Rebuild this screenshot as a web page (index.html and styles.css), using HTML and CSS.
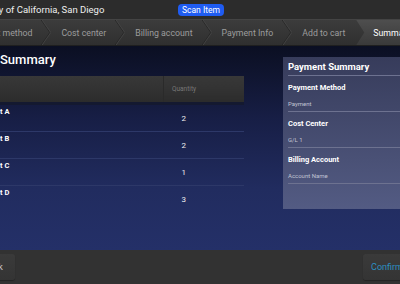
FILE: index.html
```html
<!doctype html>
<html>

<head>
    <link rel="stylesheet" href="styles.css">
</head>

<body>
    <div class="app">
        <header class="topbar">
            <span class="org">University of California, San Diego</span>
            <button class="scan">Scan Item</button>
            <span></span>
        </header>

        <nav class="steps">
            <span class="step">Payment method</span>
            <svg class="chev" viewBox="0 0 10 26"><polyline class="dark" points="0,0 9,13 0,26" /><polyline class="light" points="1,0 10,13 1,26" /></svg>
            <span class="step">Cost center</span>
            <svg class="chev" viewBox="0 0 10 26"><polyline class="dark" points="0,0 9,13 0,26" /><polyline class="light" points="1,0 10,13 1,26" /></svg>
            <span class="step">Billing account</span>
            <svg class="chev" viewBox="0 0 10 26"><polyline class="dark" points="0,0 9,13 0,26" /><polyline class="light" points="1,0 10,13 1,26" /></svg>
            <span class="step">Payment Info</span>
            <svg class="chev" viewBox="0 0 10 26"><polyline class="dark" points="0,0 9,13 0,26" /><polyline class="light" points="1,0 10,13 1,26" /></svg>
            <span class="step">Add to cart</span>
            <span class="step active">Summary</span>
        </nav>

        <main class="content">
            <section class="summary">
                <h1>Summary</h1>
                <table class="items">
                    <thead>
                        <tr>
                            <th class="name"></th>
                            <th class="qty">Quantity</th>
                        </tr>
                    </thead>
                    <tbody>
                        <tr>
                            <td class="name"><b>Product A</b><small>Item 1</small></td>
                            <td class="qty">2</td>
                        </tr>
                        <tr>
                            <td class="name"><b>Product B</b><small>Item</small></td>
                            <td class="qty">2</td>
                        </tr>
                        <tr>
                            <td class="name"><b>Product C</b><small>Item</small></td>
                            <td class="qty">1</td>
                        </tr>
                        <tr>
                            <td class="name"><b>Product D</b><small>Item</small></td>
                            <td class="qty">3</td>
                        </tr>
                    </tbody>
                </table>
            </section>

            <aside class="panel">
                <h2>Payment Summary</h2>
                <div class="field">
                    <h3>Payment Method</h3>
                    <p>Payment</p>
                </div>
                <div class="field">
                    <h3>Cost Center</h3>
                    <p>G/L 1</p>
                </div>
                <div class="field">
                    <h3>Billing Account</h3>
                    <p>Account Name</p>
                </div>
            </aside>
        </main>

        <footer class="actions">
            <button class="btn back">Back</button>
            <button class="btn confirm">Confirm</button>
        </footer>
    </div>
</body>

</html>
```

FILE: styles.css
```css
html,
body {
    overflow: hidden;
    width: 100%;
    height: 100%;
    margin: 0;
    background-color: #323232;
}

.app {
    width: 480px;
    margin-left: -40px;
    font-family: Roboto, "Liberation Sans", sans-serif;
}

/* top bar */

.topbar {
    display: grid;
    grid-template-columns: 1fr auto 1fr;
    align-items: center;
    height: 19px;
    padding-left: 2px;
    background-color: #2c2c2c;
    border-bottom: 1px solid #444;
}

.org {
    color: #eee;
    font-size: 9.5px;
    white-space: nowrap;
}

.scan {
    height: 12px;
    padding: 0 4px;
    border: none;
    border-radius: 4px;
    background-color: #1f5cf2;
    color: #fff;
    font-family: inherit;
    font-size: 8.5px;
    line-height: 12px;
}

/* steps */

.steps {
    display: flex;
    align-items: stretch;
    height: 25px;
    background: linear-gradient(#3c3c3c, #2f2f2f);
    border-bottom: 1px solid #1f1f1f;
}

.step {
    display: flex;
    align-items: center;
    padding: 0 9px 0 10px;
    color: #9c9c9c;
    font-size: 8.75px;
    white-space: nowrap;
}

.step:first-child {
    padding-left: 6px;
}

.chev {
    width: 10px;
    height: 25px;
    flex: none;
}

.chev polyline {
    fill: none;
    stroke-width: 0.8;
}

.chev .dark {
    stroke: #242424;
}

.chev .light {
    stroke: #484848;
}

.step.active {
    flex: 1;
    margin-left: 2px;
    padding-left: 17px;
    background: linear-gradient(#4e4e4e, #3a3a3a);
    clip-path: polygon(0 0, 100% 0, 100% 100%, 0 100%, 8px 50%);
    color: #fff;
}

/* main area */

.content {
    display: flex;
    align-items: flex-start;
    height: 198px;
    padding: 6px 0 0 10px;
    background: linear-gradient(#0b0f22, #171e45 35%, #212c5f 70%, #243068);
}

.summary {
    width: 274px;
    flex: none;
}

.summary h1 {
    margin: 0 0 8px 30px;
    color: #fff;
    font-size: 13px;
    font-weight: 500;
    line-height: 16px;
}

.items {
    width: 100%;
    border-collapse: collapse;
}

.items th {
    height: 26px;
    padding: 0;
    background: linear-gradient(#383838, #2c2c2c);
    border-bottom: 3px solid #141930;
    color: #777;
    font-size: 6.5px;
    font-weight: normal;
    text-align: left;
}

.items th.qty {
    width: 72px;
    padding-left: 8px;
    border-left: 1px solid #2a2a2a;
}

.items td {
    height: 26px;
    padding: 0;
    border-bottom: 1px solid #2d3868;
}

.items tr:last-child td {
    border-bottom: none;
}

.items td.name {
    padding-left: 6px;
    vertical-align: top;
}

.items td.name b {
    display: block;
    margin-top: 2px;
    color: #fff;
    font-size: 7.5px;
    line-height: 9px;
}

.items td.name small {
    display: block;
    color: #b0b4c8;
    font-size: 6px;
    line-height: 9px;
}

.items td.qty {
    padding-left: 18px;
    color: #eee;
    font-size: 8px;
    vertical-align: middle;
}

/* right panel */

.panel {
    width: 115px;
    flex: none;
    margin: 5px 0 0 39px;
    padding: 0 0 25px 5px;
    background: linear-gradient(#373c5b, #535b83);
}

.panel h2 {
    margin: 0;
    height: 17px;
    padding-top: 1px;
    border-bottom: 1px solid #6d7290;
    color: #fff;
    font-size: 9.5px;
    font-weight: bold;
    line-height: 17px;
}

.field {
    height: 35px;
    border-bottom: 1px solid #6d7290;
}

.field h3 {
    margin: 0;
    padding-top: 7px;
    color: #fff;
    font-size: 7.5px;
    font-weight: bold;
    line-height: 10px;
}

.field p {
    margin: 7px 0 0;
    color: #c0c3d3;
    font-size: 6px;
    line-height: 8px;
}

/* footer */

.actions {
    display: flex;
    justify-content: space-between;
    height: 30px;
    padding: 4px 29px 0 11px;
    background-color: #323232;
}

.btn {
    height: 26px;
    padding: 0 12px;
    border: none;
    border-radius: 3px;
    background: linear-gradient(#3a3a3a, #343434);
    box-shadow: 0 1px 1px rgba(0, 0, 0, 0.3);
    font-family: inherit;
    font-size: 9px;
}

.back {
    color: #ccc;
}

.confirm {
    padding: 0 8px;
    color: #2b90c2;
}
```
